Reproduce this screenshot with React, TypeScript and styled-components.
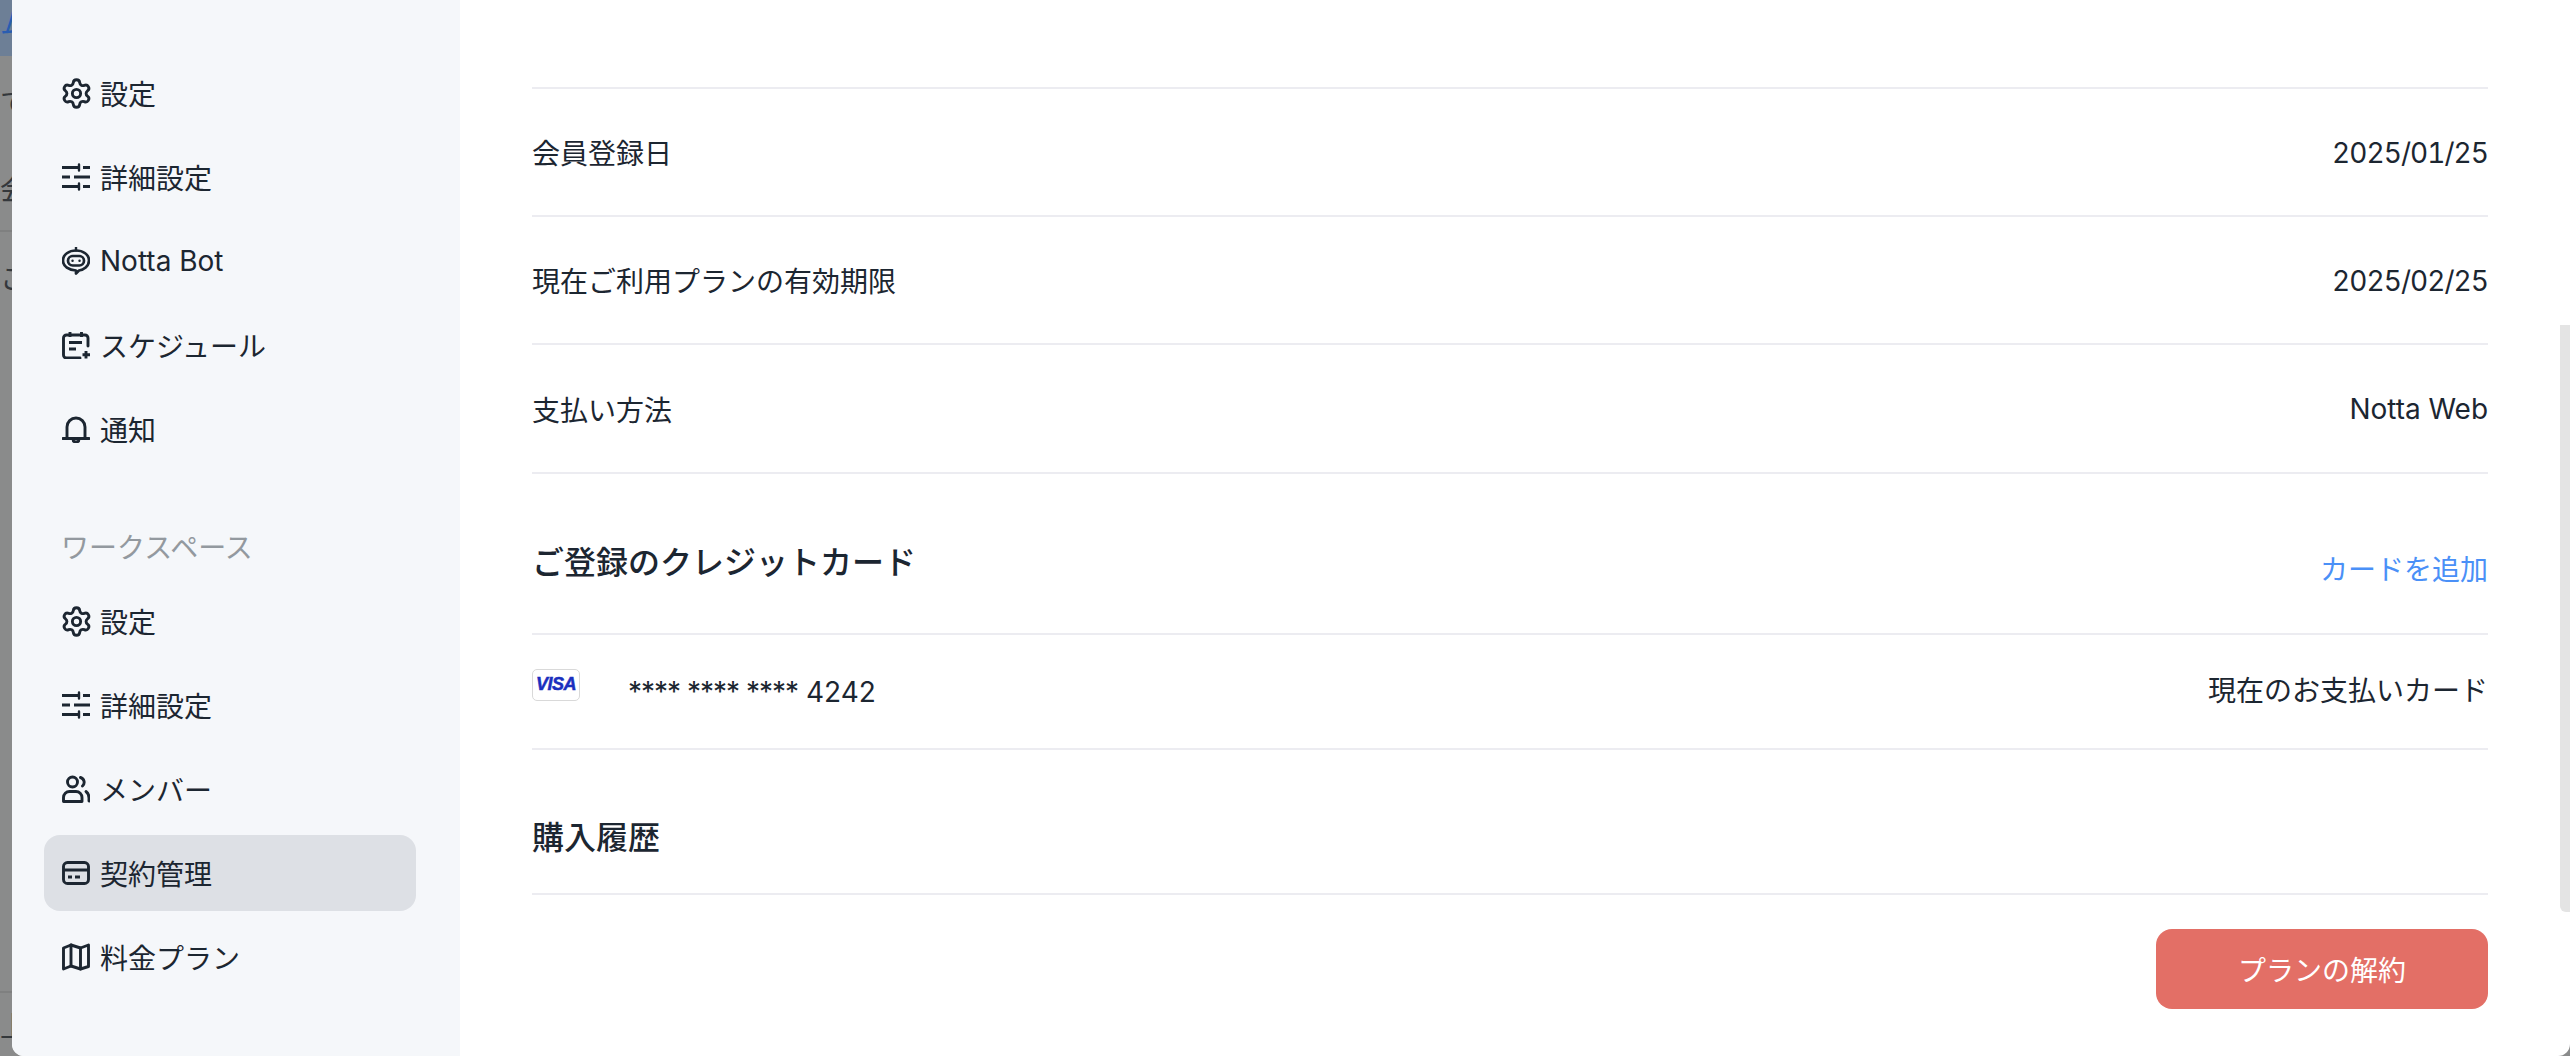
import { ReactNode } from "react";
import styled, { createGlobalStyle } from "styled-components";
import { Settings } from "lucide-react";

const GlobalStyle = createGlobalStyle`
  html, body {
    margin: 0;
    padding: 0;
    height: 100%;
    background: #8a8b8b;
    font-family: Inter, "Noto Sans CJK JP", sans-serif;
    color: #1c2631;
  }
`;

const Page = styled.div`
  display: flex;
  width: 2570px;
  height: 1056px;
  overflow: hidden;
  background: #8a8b8b;
`;

const Backdrop = styled.div`
  flex: 0 0 12px;
  display: flex;
  flex-direction: column;
  overflow: hidden;
  font-size: 28px;
  color: #34383c;
`;

const BackdropBanner = styled.div`
  height: 56px;
  flex: none;
  background: #6d7f96;
  color: #2a5db0;
  line-height: 48px;
  white-space: nowrap;
`;

const BackdropRow = styled.div<{ $height: number; $ruled?: boolean }>`
  height: ${(p) => p.$height}px;
  flex: none;
  display: flex;
  align-items: center;
  white-space: nowrap;
  box-sizing: border-box;
  border-bottom: ${(p) => (p.$ruled ? "2px solid #7f8080" : "none")};
`;

const Modal = styled.div`
  flex: 1;
  display: flex;
  min-width: 0;
  border-radius: 0 0 12px 12px;
  overflow: hidden;
  background: #fff;
`;

const Sidebar = styled.nav`
  flex: 0 0 448px;
  box-sizing: border-box;
  background: #f5f7fa;
  padding: 55px 44px 0 32px;
  display: flex;
  flex-direction: column;
`;

const NavGroup = styled.div`
  display: flex;
  flex-direction: column;
  gap: 8px;
`;

const NavItem = styled.div<{ $active?: boolean }>`
  height: 76px;
  display: flex;
  align-items: center;
  gap: 10px;
  padding-left: 18px;
  border-radius: 16px;
  font-size: 28px;
  background: ${(p) => (p.$active ? "#dde0e5" : "transparent")};
`;

const IconSlot = styled.span`
  flex: 0 0 28px;
  width: 28px;
  height: 28px;
  display: flex;
  align-items: center;
  justify-content: center;
  color: #1c2631;
`;

const SectionLabel = styled.div`
  margin: 58px 0 12px 17px;
  height: 46px;
  line-height: 46px;
  font-size: 28px;
  color: #93999f;
`;

const Content = styled.main`
  flex: 1;
  min-width: 0;
  box-sizing: border-box;
  padding: 87px 72px 0;
  display: flex;
  flex-direction: column;
`;

const Row = styled.div<{ $height?: number }>`
  height: ${(p) => p.$height ?? 128}px;
  flex: none;
  box-sizing: border-box;
  display: flex;
  align-items: center;
  justify-content: space-between;
  border-top: 2px solid #ececf1;
  font-size: 28px;
`;

const Value = styled.span<{ $date?: boolean }>`
  margin-top: ${(p) => (p.$date ? "2px" : "0")};
  font-variant-numeric: ${(p) => (p.$date ? "tabular-nums" : "normal")};
  letter-spacing: ${(p) => (p.$date ? "-0.95px" : "-0.05px")};
`;

const LastRule = styled.div`
  flex: none;
  border-top: 2px solid #ececf1;
`;

const CardHead = styled.div`
  height: 161px;
  flex: none;
  box-sizing: border-box;
  border-top: 2px solid #ececf1;
  display: flex;
  justify-content: space-between;
`;

const SectionTitle = styled.h3`
  margin: 0;
  font-size: 32px;
  font-weight: 500;
  line-height: 44px;
`;

const CardTitle = styled(SectionTitle)`
  margin-top: 67px;
`;

const AddLink = styled.a`
  margin-top: 76px;
  font-size: 28px;
  line-height: 40px;
  color: #4a90f7;
`;

const CardInfo = styled.div`
  display: flex;
  align-items: center;
`;

const VisaBadge = styled.span`
  box-sizing: border-box;
  width: 48px;
  height: 32px;
  margin-right: 48px;
  position: relative;
  top: -7px;
  border: 1.5px solid #d9d9d9;
  border-radius: 5px;
  display: flex;
  align-items: center;
  justify-content: center;
  font-family: "Liberation Sans", sans-serif;
  font-size: 18px;
  font-weight: 700;
  font-style: italic;
  letter-spacing: -0.5px;
  -webkit-text-stroke: 0.5px #1a2fbe;
  color: #1a2fbe;
`;

const CardMask = styled.span`
  letter-spacing: -1px;
`;

const CardLabel = styled.span`
  margin-bottom: 6px;
`;

const PurchaseHead = styled.div`
  height: 145px;
  flex: none;
  box-sizing: border-box;
  border-top: 2px solid #ececf1;
  padding-top: 66px;
`;

const Footer = styled.div`
  display: flex;
  justify-content: flex-end;
  padding-top: 34px;
`;

const CancelButton = styled.button`
  width: 332px;
  height: 80px;
  border: none;
  border-radius: 16px;
  background: #e36f66;
  color: #fff;
  font-family: inherit;
  font-size: 28px;
`;

const ScrollTrack = styled.div`
  flex: 0 0 10px;
  padding-top: 325px;
`;

const ScrollThumb = styled.div`
  height: 587px;
  background: #e4e4e4;
  border-radius: 0 0 0 6px;
`;

const IconSvg = ({ children }: { children: ReactNode }) => (
  <svg
    width="28"
    height="28"
    viewBox="0 0 28 28"
    fill="none"
    stroke="currentColor"
    strokeWidth="2.9"
    strokeLinecap="round"
    strokeLinejoin="round"
  >
    {children}
  </svg>
);

const GearIcon = () => (
  <Settings size={33} strokeWidth={2.1} style={{ flex: "none" }} />
);

const SlidersIcon = () => (
  <IconSvg>
    <path strokeLinecap="butt" d="M0 4.500h16M21 4.500h7M0 14h8M12 14h16M0 23.500h16M21 23.500h7" />
    <path d="M17 1.500v6M17 20.500v6" strokeWidth="2.400" />
  </IconSvg>
);

const BotIcon = () => (
  <IconSvg>
    <path strokeWidth="2.400" d="M14 0.500v3" />
    <path
      strokeWidth="2.700"
      d="M14 3.500c7 0 13 4 13 10 0 6-5.500 9.500-10 10l-3 3v-3C7 23 1 19.500 1 13.500c0-6 6-10 13-10Z"
    />
    <rect x="6" y="9" width="16" height="9.500" rx="4.700" strokeWidth="2.700" />
    <path strokeWidth="2.400" d="M10.500 13.800h.1M17.500 13.800h.1" />
  </IconSvg>
);

const CalendarPlusIcon = () => (
  <IconSvg>
    <path d="M26 15V7a3 3 0 0 0-3-3H4.500a3 3 0 0 0-3 3v17a3 3 0 0 0 3 3H18" />
    <path d="M8 1v5M19.500 1v5M7 11.500h13M7 18h7M24 20v7.500M20.500 23.800h7.500" strokeLinecap="butt" />
  </IconSvg>
);

const BellIcon = () => (
  <IconSvg>
    <path d="M1 23.500h26" />
    <path d="M5 23V12a9 9 0 0 1 18 0v11" />
    <path d="M11 24c0 4 6 4 6 0" />
  </IconSvg>
);

const UsersIcon = () => (
  <IconSvg>
    <circle cx="10.500" cy="7" r="5" />
    <path d="M1.500 26.500v-4a6 6 0 0 1 6-6h6.500a6 6 0 0 1 6 6v4Z" />
    <path d="M18.500 2.500a5 5 0 0 1 2 8.500M24 16.500c2 1.500 3 3.500 3 6.500v3" />
  </IconSvg>
);

const CardIcon = () => (
  <IconSvg>
    <rect x="1.500" y="3.500" width="25" height="21" rx="4" />
    <path d="M1.500 11h25M6 18h4M13 18h5" strokeLinecap="butt" />
  </IconSvg>
);

const MapIcon = () => (
  <IconSvg>
    <path d="M1.500 5 9 2l9.500 3 8-3v21.500L18.500 26 9 23l-7.500 3V5Z" />
    <path d="M9 2v21M18.500 5v21" />
  </IconSvg>
);

const personalItems = [
  { label: "設定", icon: <GearIcon /> },
  { label: "詳細設定", icon: <SlidersIcon /> },
  { label: "Notta Bot", icon: <BotIcon /> },
  { label: "スケジュール", icon: <CalendarPlusIcon /> },
  { label: "通知", icon: <BellIcon /> },
];

const workspaceItems = [
  { label: "設定", icon: <GearIcon /> },
  { label: "詳細設定", icon: <SlidersIcon /> },
  { label: "メンバー", icon: <UsersIcon /> },
  { label: "契約管理", icon: <CardIcon />, active: true },
  { label: "料金プラン", icon: <MapIcon /> },
];

const infoRows = [
  { label: "会員登録日", value: "2025/01/25", height: 128, date: true },
  { label: "現在ご利用プランの有効期限", value: "2025/02/25", height: 128, date: true },
  { label: "支払い方法", value: "Notta Web", height: 129, date: false },
];

const App = () => (
  <Page>
    <GlobalStyle />
    <Backdrop>
      <BackdropBanner>ム</BackdropBanner>
      <BackdropRow $height={90}>て</BackdropRow>
      <BackdropRow $height={86} $ruled>会</BackdropRow>
      <BackdropRow $height={90}>こ</BackdropRow>
      <BackdropRow $height={671} $ruled />
      <BackdropRow $height={63}>上</BackdropRow>
    </Backdrop>
    <Modal>
      <Sidebar>
        <NavGroup>
          {personalItems.map((item) => (
            <NavItem key={item.label}>
              <IconSlot>{item.icon}</IconSlot>
              {item.label}
            </NavItem>
          ))}
        </NavGroup>
        <SectionLabel>ワークスペース</SectionLabel>
        <NavGroup>
          {workspaceItems.map((item) => (
            <NavItem key={item.label} $active={item.active}>
              <IconSlot>{item.icon}</IconSlot>
              {item.label}
            </NavItem>
          ))}
        </NavGroup>
      </Sidebar>
      <Content>
        {infoRows.map((row) => (
          <Row key={row.label} $height={row.height}>
            <span>{row.label}</span>
            <Value $date={row.date}>{row.value}</Value>
          </Row>
        ))}
        <CardHead>
          <CardTitle>ご登録のクレジットカード</CardTitle>
          <AddLink>カードを追加</AddLink>
        </CardHead>
        <Row $height={115}>
          <CardInfo>
            <VisaBadge>VISA</VisaBadge>
            <span>
              <CardMask>**** **** ****</CardMask> 4242
            </span>
          </CardInfo>
          <CardLabel>現在のお支払いカード</CardLabel>
        </Row>
        <PurchaseHead>
          <SectionTitle>購入履歴</SectionTitle>
        </PurchaseHead>
        <LastRule />
        <Footer>
          <CancelButton>プランの解約</CancelButton>
        </Footer>
      </Content>
      <ScrollTrack>
        <ScrollThumb />
      </ScrollTrack>
    </Modal>
  </Page>
);

export default App;
